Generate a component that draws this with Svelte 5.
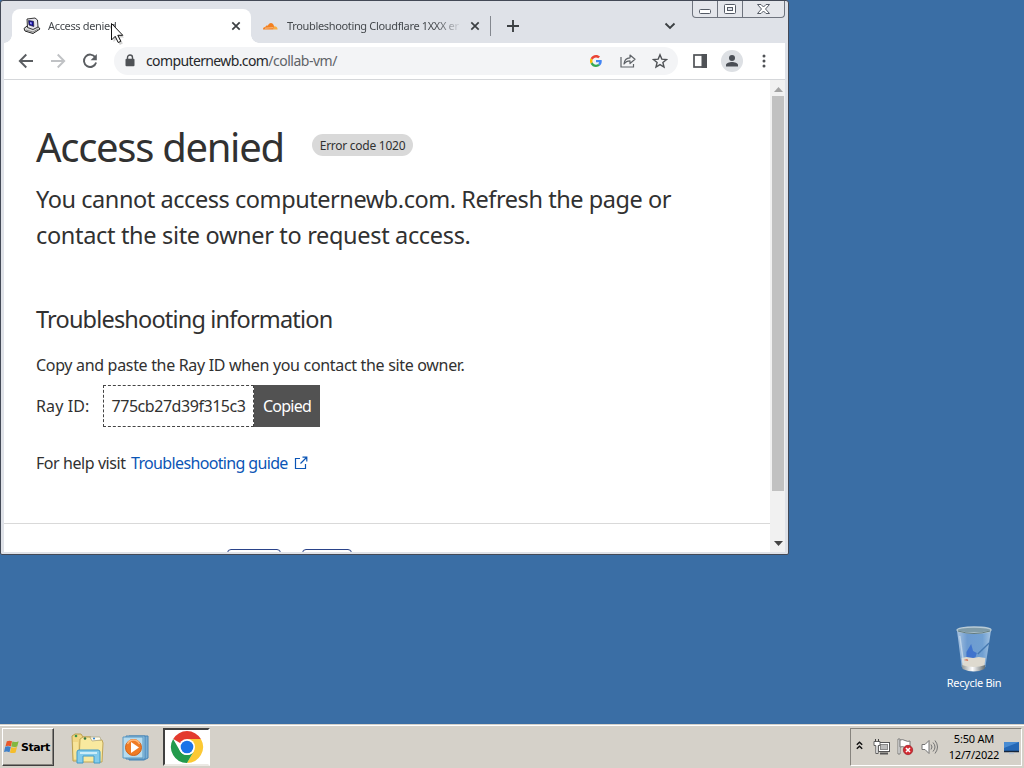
<script lang="ts">
  interface Tab {
    title: string;
    icon: "vm" | "cloud";
    active: boolean;
  }

  const tabs: Tab[] = [
    { title: "Access denied", icon: "vm", active: true },
    { title: "Troubleshooting Cloudflare 1XXX er", icon: "cloud", active: false },
  ];

  const rayId = "775cb27d39f315c3";
  let copied = $state(true);
</script>

<div class="desktop">
  <div class="workspace">
    <div class="window">
      <!-- Tab strip -->
      <div class="tabstrip">
        {#each tabs as tab}
          <div class="tab" class:active={tab.active}>
            {#if tab.icon === "vm"}
              <svg class="favicon" width="18" height="18" viewBox="0 0 18 18">
                <path d="M1 11.500l3-2.500 11 .5 2 2.500-7 4.500-8-2.500z" fill="#ddd" stroke="#222" />
                <path d="M4 2l8-1 2.500 2 .5 7-5 2.500-5.500-2z" fill="#e8e6ee" stroke="#222" stroke-width=".9" />
                <path d="M5.500 3.500l5 .8.3 5.200-4.800-1.500z" fill="#160e9c" stroke="#223" stroke-width=".7" />
                <path d="M7 5l1.800.4v2L7 7z" fill="#9a9af0" />
                <path d="M3 13l7 2 5-3" fill="none" stroke="#888" />
              </svg>
            {:else}
              <svg class="favicon" width="17" height="16" viewBox="0 0 17 16">
                <path d="M1 11.500c0-1.700 1.200-2.500 2.400-2.400C3.700 7.500 5 7.200 5.800 7.800 7 4 11 3.800 12 8l-.4 3.500z" fill="#f38020" />
                <path d="M12 8.300c2-.2 3.500 1 3.600 3.200h-4z" fill="#faae40" />
                <path d="M3 10.200l8-.5" stroke="#fbd5ae" stroke-width=".7" />
              </svg>
            {/if}
            <span class="tab-title">{tab.title}</span>
            <svg class="tab-close" width="10" height="10" viewBox="0 0 10 10">
              <path d="M1.300 1.300l7.400 7.400M8.700 1.300L1.300 8.700" stroke="#3c4043" stroke-width="1.700" />
            </svg>
          </div>
        {/each}
        <span class="tab-sep"></span>
        <svg class="new-tab" width="14" height="14" viewBox="0 0 14 14">
          <path d="M7 1v12M1 7h12" stroke="#3c4043" stroke-width="1.900" />
        </svg>
        <svg class="tab-search" width="12" height="8" viewBox="0 0 12 8">
          <path d="M1.500 1.500L6 6l4.500-4.500" fill="none" stroke="#3c4043" stroke-width="1.900" />
        </svg>
        <div class="caption">
          <span class="cap">
            <svg width="24" height="16" viewBox="0 0 24 16">
              <rect x="6.500" y="8.500" width="11" height="4" rx="1" fill="#fff" stroke="#555b66" />
            </svg>
          </span>
          <span class="cap">
            <svg width="24" height="16" viewBox="0 0 24 16">
              <rect x="6.500" y="3.500" width="11" height="9" rx="1" fill="#fff" stroke="#555b66" />
              <rect x="9.500" y="6.500" width="5" height="3" fill="#dfe2e9" stroke="#555b66" />
            </svg>
          </span>
          <span class="cap close">
            <svg width="41" height="16" viewBox="0 0 41 16">
              <path d="M14.500 3.500h3.500l2.500 2.500L23 3.500h3.500L22.500 8l4 4.500H23L20.500 10 18 12.500h-3.500l4-4.500z" fill="#fff" stroke="#555b66" />
            </svg>
          </span>
        </div>
      </div>

      <!-- Toolbar -->
      <div class="toolbar">
        <svg width="16" height="16" viewBox="0 0 16 16" fill="none" stroke="#5a5d61" stroke-width="1.900">
          <path d="M15 8H2M8.300 1.500L1.800 8l6.500 6.500" />
        </svg>
        <svg width="16" height="16" viewBox="0 0 16 16" fill="none" stroke="#c0c2c5" stroke-width="1.900">
          <path d="M1 8h13M7.700 1.500L14.200 8l-6.500 6.500" />
        </svg>
        <svg width="16" height="16" viewBox="0 0 16 16">
          <path d="M13.300 4.300A6.200 6.200 0 1 0 14.100 9.500" fill="none" stroke="#5a5d61" stroke-width="1.900" />
          <path d="M14.800 1v6.200H8.600z" fill="#5a5d61" />
        </svg>
        <div class="omnibox">
          <svg class="lock" width="10" height="13" viewBox="0 0 10 13">
            <path d="M2.500 5V3.500a2.500 2.500 0 0 1 5 0V5" fill="none" stroke="#4f5256" stroke-width="1.400" />
            <rect x=".5" y="4.700" width="9" height="7.600" rx="1" fill="#4f5256" />
          </svg>
          <span class="url"><b>computernewb.com</b>/collab-vm/</span>
          <svg class="google" width="12" height="12" viewBox="0 0 48 48">
            <path fill="#ea4335" d="M24 9.500c3.500 0 6.700 1.200 9.200 3.600l6.900-6.900C35.900 2.400 30.500 0 24 0 14.600 0 6.500 5.400 2.600 13.200l8 6.200C12.400 13.700 17.700 9.500 24 9.500z" />
            <path fill="#4285f4" d="M47 24.600c0-1.600-.2-3.100-.4-4.600H24v9h12.900c-.6 3-2.300 5.500-4.800 7.200l7.700 6C44.400 38 47 31.800 47 24.600z" />
            <path fill="#fbbc05" d="M10.500 28.600a14.500 14.500 0 0 1 0-9.200l-8-6.200a24 24 0 0 0 0 21.600z" />
            <path fill="#34a853" d="M24 48c6.500 0 11.900-2.100 15.900-5.800l-7.700-6c-2.200 1.500-4.900 2.300-8.200 2.300-6.300 0-11.600-4.200-13.500-9.900l-8 6.200C6.500 42.600 14.600 48 24 48z" />
          </svg>
          <svg class="share" width="16" height="15" viewBox="0 0 16 15" fill="none" stroke="#5f6368" stroke-width="1.200">
            <path d="M1 4v10h12.500v-3" />
            <path d="M4 11c.3-4 2.500-6 6-6.200V2l5 4.300-5 4.200V7.800C7.300 7.800 5.500 8.700 4 11z" stroke-linejoin="round" />
          </svg>
          <svg class="star" width="16" height="16" viewBox="0 0 16 16">
            <path d="M8 1.800l1.800 4.300 4.700.4-3.600 3 1.100 4.600-4-2.500-4 2.500 1.100-4.600-3.600-3 4.700-.4z" fill="none" stroke="#4f5256" stroke-width="1.400" />
          </svg>
        </div>
        <svg class="panel" width="14" height="14" viewBox="0 0 14 14">
          <rect x="1" y="1" width="12" height="12" fill="none" stroke="#4f5256" stroke-width="1.700" />
          <rect x="8.500" y="0" width="5.500" height="14" fill="#4f5256" />
        </svg>
        <div class="avatar">
          <svg width="14" height="14" viewBox="0 0 14 14" fill="#4a4e55">
            <circle cx="7" cy="4" r="3" />
            <path d="M1 12.500v-1.500c0-2 3.500-3 6-3s6 1 6 3v1.500z" />
          </svg>
        </div>
        <svg class="more" width="4" height="14" viewBox="0 0 4 14" fill="#4f5256">
          <circle cx="2" cy="2" r="1.500" />
          <circle cx="2" cy="7" r="1.500" />
          <circle cx="2" cy="12" r="1.500" />
        </svg>
      </div>

      <!-- Page -->
      <div class="viewport">
        <div class="page">
          <main>
            <div class="heading">
              <h1>Access denied</h1>
              <span class="code">Error code 1020</span>
            </div>
            <p class="lead">
              <span>You cannot access computernewb.com. Refresh the page or</span><br />
              <span class="second">contact the site owner to request access.</span>
            </p>
            <h2>Troubleshooting information</h2>
            <p class="copy">Copy and paste the Ray ID when you contact the site owner.</p>
            <div class="ray">
              <span class="ray-label">Ray ID:</span>
              <code>{rayId}</code>
              <button onclick={() => (copied = true)}>{copied ? "Copied" : "Copy"}</button>
            </div>
            <p class="help">
              <span>For help visit</span>
              <span class="link">Troubleshooting guide</span>
              <svg width="14" height="14" viewBox="0 0 14 14" fill="none" stroke="#0b55b5" stroke-width="1.200">
                <path d="M6 2.500H1.500v10h10V8M8.500 1.200h4.300v4.300M12.500 1.500L6.500 7.500" />
              </svg>
            </p>
          </main>
          <footer>
            <span class="choice yes"></span>
            <span class="choice no"></span>
          </footer>
        </div>
        <div class="scrollbar">
          <svg width="9" height="5" viewBox="0 0 9 5"><path d="M0 5l4.500-5L9 5z" fill="#a3a3a3" /></svg>
          <div class="thumb"></div>
          <svg class="down" width="9" height="5" viewBox="0 0 9 5"><path d="M0 0l4.500 5L9 0z" fill="#444" /></svg>
        </div>
      </div>
    </div>

    <div class="recycle">
      <svg width="36" height="48" viewBox="1 0 38 48" preserveAspectRatio="none">
        <defs>
          <linearGradient id="glass" x2="1">
            <stop offset="0" stop-color="#a9c4e0" />
            <stop offset=".3" stop-color="#6d9bd0" />
            <stop offset=".75" stop-color="#70a0d2" />
            <stop offset="1" stop-color="#a5c4e2" />
          </linearGradient>
          <linearGradient id="base" x2="1">
            <stop offset="0" stop-color="#8f9492" />
            <stop offset=".45" stop-color="#fff" />
            <stop offset="1" stop-color="#5f6768" />
          </linearGradient>
        </defs>
        <path d="M2 5l5 37q13 7 25 0l6-37z" fill="url(#glass)" />
        <path d="M12 27l5-8 2 7 4 2-2 6-9 1z" fill="#2c62cc" opacity=".7" />
        <path d="M36 18l-12 11" fill="none" stroke="#4579b2" stroke-width="1.500" />
        <path d="M7 33l5-1 7 1 6-1 7 1-1 8q-12 5-23 0z" fill="#dedacf" />
        <path d="M9 35l4-1 1 2z" fill="#d66b50" />
        <path d="M7 40q13 4 25 0l-1 4q-11 5-23 0z" fill="url(#base)" />
        <ellipse cx="20" cy="5" rx="18" ry="3" fill="#7f9ba8" stroke="#b9cbd5" stroke-width="1.300" />
        <path d="M3 6q17 5 34 0" fill="none" stroke="#60797b" />
        <path d="M5 11l4 27" stroke="#d1e1ef" stroke-width="1.500" opacity=".7" />
      </svg>
      <span>Recycle Bin</span>
    </div>

    <svg class="cursor" width="15" height="24" viewBox="0 0 15 24">
      <path d="M3.500 4v16l3.300-3 3 6 3-1.500-3-6H14z" fill="#777" opacity=".35" />
      <path d="M1.500 1.500v16.500l3.700-3.700 3 6.200 2.600-1.200-3-6h5z" fill="#fff" stroke="#111" />
    </svg>
  </div>

  <!-- Taskbar -->
  <div class="taskbar">
    <div class="start">
      <svg width="17" height="16" viewBox="0 0 18 16">
        <path d="M3 2q3-1.500 5.500 0L7.300 7.400Q4.500 6 1.500 7.400z" fill="#e9582a" />
        <path d="M8.900 2.300q3 1.200 6.600-.5L14 7.400q-3 1.300-6.300.2z" fill="#83b840" />
        <path d="M1.300 7.800q3-1.200 5.900.2L5.800 13.500q-3-1.500-5.800-.2z" fill="#3f80c8" />
        <path d="M7.600 8.200q3 1.100 6.200-.3L12.300 13.700q-3 1.400-6 .2z" fill="#f5bd2b" />
      </svg>
      <span>Start</span>
    </div>
    <div class="quick">
      <svg class="explorer" width="34" height="32" viewBox="0 0 34 32">
        <path d="M1 3l3-2h6l2 3h8v24H2z" fill="#f1d783" stroke="#baa052" />
        <path d="M9 6l3-2h7l2 3h10l1 3-1 19H8z" fill="#f9e99f" stroke="#c2a655" />
        <path d="M2 9h5v17H3z" fill="#f7e49a" />
        <path d="M19 4h10l1 3-9 1z" fill="#fffbea" stroke="#aaa37e" stroke-width=".7" />
        <circle cx="5" cy="3" r="1.300" fill="#36934c" />
        <circle cx="14" cy="5.500" r="1.300" fill="#397a40" />
        <circle cx="23" cy="5.500" r="1.100" fill="#3987d4" />
        <path d="M6 30V19q0-2 2-2h19q2 0 2 2v11h-6v-7H12v7z" fill="#83cbeb" stroke="#419ac7" />
        <path d="M9 20h17" stroke="#ccedf8" stroke-width="2" />
      </svg>
      <svg class="media" width="28" height="28" viewBox="0 0 28 28">
        <path d="M7 2h19v22l-4 2H7z" fill="#78aed5" stroke="#4684b6" />
        <path d="M4 2h19v23H4z" fill="#a0cce8" stroke="#4684b6" />
        <path d="M1 3h20v21H1z" fill="#b6dbee" stroke="#5898c2" />
        <circle cx="11.500" cy="13.500" r="8" fill="#ef7b24" stroke="#d06018" />
        <path d="M5.500 10a6.500 6.500 0 0 1 12 0" fill="none" stroke="#ffb676" stroke-width="1.500" />
        <path d="M9 8l8 5.500L9 19z" fill="#fff" />
      </svg>
      <div class="running">
        <svg width="34" height="34" viewBox="0 0 48 48">
          <path d="M24 24L4.500 12.800A22.600 22.600 0 0 1 43.600 12.700H24z" fill="#e33b2e" />
          <path d="M24 12.700h19.600A22.600 22.600 0 0 1 24 46.600l9.800-17z" fill="#fcc934" />
          <path d="M33.800 29.600L24 46.600A22.600 22.600 0 0 1 4.400 12.700l9.800 17a11.300 11.300 0 0 0 19.600-.1z" fill="#229a4c" />
          <circle cx="24" cy="24" r="11.300" fill="#fff" />
          <circle cx="24" cy="24" r="8.900" fill="#1a73e8" />
        </svg>
      </div>
    </div>
    <div class="tray">
      <svg class="expand" width="7" height="9" viewBox="0 0 7 9" fill="none" stroke="#111" stroke-width="1.500">
        <path d="M.8 3.800l2.700-2.500 2.700 2.500M.8 7.800l2.700-2.500 2.700 2.500" />
      </svg>
      <svg class="network" width="17" height="17" viewBox="0 0 17 17">
        <rect x="5.500" y="3.500" width="11" height="9" fill="#fff" stroke="#555" />
        <rect x="7.500" y="5.500" width="7" height="5" fill="#bbb" stroke="#888" />
        <path d="M7 14.500h8" stroke="#555" stroke-width="2" />
        <path d="M1 2.500h6v4H5.200v8H2.800v-8H1z" fill="#fff" stroke="#555" stroke-width=".9" />
        <path d="M2.500 0v2.500M5.500 0v2.500" stroke="#444" />
      </svg>
      <svg class="flag" width="17" height="18" viewBox="0 0 17 18">
        <path d="M1 1h2v15H1z" fill="#fff" stroke="#666" stroke-width=".8" />
        <path d="M3 2q3-1 5 .5 3 1.500 5 .5v7q-3 1-5-.5T3 9z" fill="#fff" stroke="#777" />
        <circle cx="11" cy="12" r="4.700" fill="#d32b32" stroke="#991f28" stroke-width=".7" />
        <path d="M9 10l4 4M13 10l-4 4" stroke="#fff" stroke-width="1.600" />
      </svg>
      <svg class="sound" width="17" height="16" viewBox="0 0 17 16" fill="none" stroke="#737373">
        <path d="M1 5.500h3l4-4v13l-4-4H1z" fill="#fff" />
        <path d="M10 5.500q2 2.500 0 5M12 3.500q4 4.500 0 9M14 1.500q5 6.500 0 13" />
      </svg>
      <div class="clock">
        <span>5:50 AM</span>
        <span>12/7/2022</span>
      </div>
      <svg class="show-desktop" width="15" height="14" viewBox="0 0 15 14">
        <path d="M0 1h15v10H0z" fill="#2467b5" />
        <path d="M0 1h15L0 7z" fill="#478bd3" />
        <path d="M0 10.500h15" stroke="#15263d" stroke-width="1.500" />
        <path d="M5 12.500h5" stroke="#b8c6d7" stroke-width="1.500" />
      </svg>
    </div>
  </div>
</div>

<style>
  :global(body) {
    margin: 0;
    overflow: hidden;
  }

  .desktop {
    width: 1024px;
    height: 768px;
    display: flex;
    flex-direction: column;
    background: #3a6ea5;
    font-family: Tahoma, "Noto Sans", "DejaVu Sans", sans-serif;
    color: #313131;
    overflow: hidden;
  }

  .desktop * {
    box-sizing: border-box;
    white-space: nowrap;
  }

  svg {
    display: block;
    flex: none;
  }

  .workspace {
    position: relative;
    height: 724px;
    display: flex;
    justify-content: space-between;
  }

  /* ── Browser window ── */
  .window {
    width: 789px;
    height: 555px;
    display: flex;
    flex-direction: column;
    border: 1px solid #434956;
    border-radius: 3px 3px 2px 2px;
    padding: 0 3px 2px;
    background: #dfe2e8;
  }

  .tabstrip {
    height: 42px;
    flex: none;
    display: flex;
    align-items: flex-end;
    padding-left: 8px;
  }

  .tab {
    width: 239px;
    height: 34px;
    display: flex;
    align-items: center;
    padding: 0 10px 0 11px;
    font-size: 11px;
    color: #45494d;
  }
  .tab.active {
    background: #fff;
    border-radius: 8px 8px 0 0;
    position: relative;
  }
  .tab.active::before,
  .tab.active::after {
    content: "";
    position: absolute;
    bottom: 0;
    width: 8px;
    height: 8px;
  }
  .tab.active::before {
    left: -8px;
    background: radial-gradient(circle at 0 0, transparent 7.5px, #fff 8px);
  }
  .tab.active::after {
    right: -8px;
    background: radial-gradient(circle at 100% 0, transparent 7.5px, #fff 8px);
  }

  .favicon {
    margin-right: 7px;
  }
  .tab-title {
    width: 175px;
    padding-bottom: 1px;
    mask-image: linear-gradient(to right, #000 85%, transparent);
    letter-spacing: -0.34px;
  }
  .tab-close {
    margin-left: auto;
  }
  .tab:not(.active) .tab-title {
    margin-left: 1px;
  }

  .tab-sep {
    width: 1px;
    height: 20px;
    margin-bottom: 7px;
    background: #84888f;
  }
  .new-tab {
    margin: 0 0 10px 15px;
  }
  .tab-search {
    margin: 0 0 13px 144px;
  }

  .caption {
    align-self: flex-start;
    display: flex;
    margin-left: 16px;
    height: 17px;
    border: 1px solid #6f747e;
    border-top: 0;
    border-radius: 0 0 4px 4px;
    background: #e4e6eb;
  }
  .cap + .cap {
    border-left: 1px solid #6f747e;
  }

  .toolbar {
    height: 37px;
    flex: none;
    display: flex;
    align-items: center;
    gap: 16px;
    padding: 0 0 1px 14px;
    background: #fff;
    border-bottom: 1px solid #d5d7da;
  }
  .omnibox {
    width: 564px;
    height: 28px;
    display: flex;
    align-items: center;
    padding: 0 10px 0 11px;
    border-radius: 14px;
    background: #f3f4f6;
  }
  .url {
    margin-left: 11px;
    font-size: 14px;
    letter-spacing: -0.49px;
    color: #5f6368;
  }
  .url b {
    font-weight: 400;
    letter-spacing: -0.62px;
    color: #26282b;
  }
  .google {
    margin-left: auto;
  }
  .share {
    margin-left: 18px;
  }
  .star {
    margin-left: 16px;
  }
  .panel {
    margin-left: -1px;
  }
  .avatar {
    width: 22px;
    height: 22px;
    margin-left: -2px;
    display: flex;
    align-items: center;
    justify-content: center;
    border-radius: 50%;
    background: #dde0e4;
  }
  .more {
    margin-left: 3px;
  }

  /* ── Page ── */
  .viewport {
    flex: 1;
    min-height: 0;
    display: flex;
    background: #fff;
  }
  .page {
    width: 766px;
    overflow: hidden;
  }
  main {
    height: 444px;
    padding: 37px 0 0 32px;
    border-bottom: 1px solid #d9d9d9;
  }
  h1,
  h2,
  p {
    margin: 0;
    font-weight: 400;
  }
  .heading {
    display: flex;
    align-items: center;
    height: 60px;
  }
  h1 {
    width: 276px;
    font-size: 40px;
    line-height: 60px;
    letter-spacing: -1.3px;
  }
  .code {
    height: 22px;
    width: 101px;
    margin-top: -4px;
    text-align: center;
    border-radius: 11px;
    background: #d9d9d9;
    font-size: 12px;
    line-height: 23px;
    letter-spacing: -0.26px;
  }
  .lead {
    margin-top: 4px;
    font-size: 23.5px;
    line-height: 36px;
    letter-spacing: -0.44px;
  }
  .second {
    letter-spacing: -0.33px;
  }
  h2 {
    margin-top: 48px;
    font-size: 23.5px;
    line-height: 36px;
    letter-spacing: -0.82px;
  }
  .copy {
    margin-top: 16px;
    font-size: 16px;
    line-height: 24px;
    letter-spacing: -0.32px;
  }
  .ray {
    display: flex;
    align-items: center;
    height: 42px;
    margin-top: 8px;
    font-size: 16px;
  }
  .ray-label {
    width: 67px;
    letter-spacing: 0.1px;
  }
  code {
    width: 151px;
    height: 42px;
    border: 1px dashed #444;
    font-family: inherit;
    line-height: 40px;
    text-align: center;
    letter-spacing: -0.45px;
  }
  button {
    width: 66px;
    height: 42px;
    border: 0;
    padding: 0;
    background: #525252;
    color: #fff;
    font-family: inherit;
    font-size: 16px;
    letter-spacing: -0.75px;
  }
  .help {
    display: flex;
    align-items: center;
    margin-top: 24px;
    font-size: 16px;
    line-height: 24px;
    letter-spacing: -0.43px;
  }
  .help span:first-child {
    width: 95px;
  }
  .link {
    width: 163px;
    letter-spacing: -0.65px;
    color: #0b55b5;
  }

  footer {
    display: flex;
    padding: 25px 0 0 223px;
  }
  .choice {
    height: 30px;
    border: 1px solid #2a4389;
    border-radius: 4px;
  }
  .yes {
    width: 54px;
    margin-right: 21px;
  }
  .no {
    width: 50px;
  }

  .scrollbar {
    width: 15px;
    display: flex;
    flex-direction: column;
    align-items: center;
    padding: 7px 0 6px 1px;
    background: #f1f1f1;
  }
  .thumb {
    width: 12px;
    height: 395px;
    margin-top: 4px;
    background: #c1c1c1;
  }
  .down {
    margin-top: auto;
  }

  /* ── Desktop items ── */
  .recycle {
    width: 60px;
    margin: 625px 20px 0 0;
    display: flex;
    flex-direction: column;
    align-items: center;
    color: #fff;
    font-size: 11px;
    line-height: 16px;
    letter-spacing: -0.3px;
  }
  .recycle span {
    margin-top: 2px;
  }
  .cursor {
    position: absolute;
    left: 110px;
    top: 22px;
  }

  /* ── Taskbar ── */
  .taskbar {
    height: 44px;
    display: flex;
    justify-content: space-between;
    padding: 2px 2px 0;
    background: #d5d1c9;
    border-top: 1px solid #d5d1c9;
    box-shadow: inset 0 1px #fff;
  }
  .start {
    width: 52px;
    height: 38px;
    margin-top: 1px;
    display: flex;
    align-items: center;
    padding-left: 1px;
    border: 1px solid;
    border-color: #fff #404040 #404040 #fff;
    box-shadow: inset -1px -1px #87847e;
    color: #000;
    font-family: "DejaVu Sans", sans-serif;
    font-size: 11px;
    font-weight: 700;
  }
  .start span {
    letter-spacing: -0.5px;
  }
  .quick {
    flex: 1;
    display: flex;
    align-items: flex-start;
  }
  .explorer {
    margin: 6px 0 0 17px;
  }
  .media {
    margin: 7px 0 0 17px;
  }
  .running {
    width: 47px;
    height: 38px;
    margin: 1px 0 0 13px;
    display: flex;
    align-items: center;
    justify-content: center;
    background: #fff;
    border: 2px solid;
    border-color: #404040 #fff #ece9e4 #404040;
  }
  .tray {
    width: 172px;
    height: 38px;
    margin-top: 1px;
    display: flex;
    align-items: center;
    border: 1px solid;
    border-color: #87847e #fff #fff #87847e;
  }
  .expand {
    margin: 0 0 4px 5px;
  }
  .network {
    margin-left: 10px;
  }
  .flag {
    margin-left: 7px;
  }
  .sound {
    margin-left: 7px;
  }
  .clock {
    width: 58px;
    margin-left: 7px;
    display: flex;
    flex-direction: column;
    align-items: center;
    color: #000;
    font-size: 11px;
    line-height: 16px;
    letter-spacing: -0.2px;
  }
  .show-desktop {
    margin: 2px 0 0 1px;
  }
</style>
